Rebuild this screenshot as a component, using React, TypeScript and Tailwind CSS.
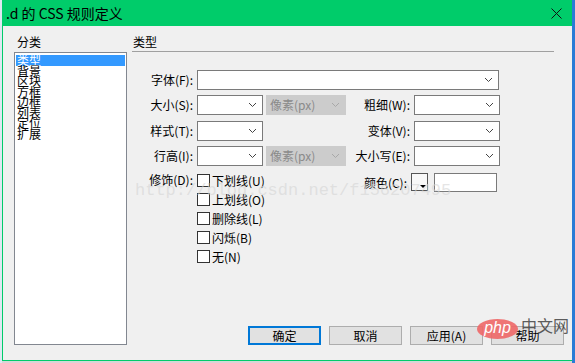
import React from 'react';

const ui = { fontFamily: '"Noto Sans CJK SC", "Noto Sans", sans-serif' };

const Chevron = ({ light = false }: { light?: boolean }) => (
  <svg width="9" height="6" viewBox="0 0 9 6" className="shrink-0">
    <path d="M1 1 L4.5 4.5 L8 1" fill="none" stroke={light ? '#a8a8a8' : '#444'} strokeWidth="1" />
  </svg>
);

const Select = ({ w, text, disabled = false }: { w: string; text?: string; disabled?: boolean }) => (
  <div
    className={`${w} h-[20px] flex items-center justify-between pl-[3px] pr-[5px] border ${
      disabled ? 'bg-[#cccccc] border-[#cccccc] text-[#8a8a8a]' : 'bg-white border-[#7a7a7a]'
    }`}
  >
    <span className="text-[12px] leading-none">{text}</span>
    <Chevron light={disabled} />
  </div>
);

const Label = ({ w, children }: { w: string; children: React.ReactNode }) => (
  <div className={`${w} shrink-0 text-right pr-[4px] text-[12px] leading-none text-black whitespace-nowrap`}>{children}</div>
);

const categories = ['类型', '背景', '区块', '方框', '边框', '列表', '定位', '扩展'];
const decorations = ['下划线(U)', '上划线(O)', '删除线(L)', '闪烁(B)', '无(N)'];
const buttons = ['确定', '取消', '应用(A)', '帮助'];

export default function App() {
  return (
    <div className="w-[575px] h-[363px] bg-[#d6d6d6] relative overflow-hidden" style={ui}>
      <div className="absolute left-0 top-0 w-[2px] h-[363px] bg-[#dfe8f2]" />
      <div className="absolute right-0 top-0 w-[3px] h-[363px] bg-[#2b7bd6]" />
      <div className="ml-[2px] w-[571px] h-[361px] border border-[#00cc6a] border-t-0 bg-[#f0f0f0] flex flex-col">
        {/* title bar */}
        <div className="h-[26px] bg-[#00cc6a] flex items-center justify-between pl-[3px] pr-[10px] shrink-0">
          <span className="text-[14px] text-black leading-none">.d 的 CSS 规则定义</span>
          <svg width="11" height="11" viewBox="0 0 11 11">
            <path d="M0.5 0.5 L10.5 10.5 M10.5 0.5 L0.5 10.5" stroke="#111" strokeWidth="1" />
          </svg>
        </div>

        {/* body */}
        <div className="flex flex-1 pl-[11px] pt-[10px] pb-[15px]">
          {/* categories */}
          <div className="w-[113px] flex flex-col">
            <div className="h-[16px] pl-[3px] text-[12px] leading-none text-black">分类</div>
            <div className="flex-1 bg-white border border-[#828790] pt-[2px] px-[1px]">
              {categories.map((c, i) => (
                <div
                  key={c}
                  className={`h-[10.5px] pl-[1px] text-[12px] leading-[10.5px] ${i === 0 ? 'bg-[#3399ff] text-white' : 'text-black'}`}
                >
                  {c}
                </div>
              ))}
            </div>
          </div>

          {/* settings */}
          <div className="ml-[5px] w-[432px] flex flex-col">
            <div className="w-[422px] h-[16px] pl-[1px] text-[12px] leading-none text-black border-b border-[#a0a0a0]">类型</div>

            <div className="mt-[18px] flex items-center">
              <Label w="w-[65px]">字体(F):</Label>
              <div className="w-[302px] h-[20px] bg-white border border-[#7a7a7a] flex items-center justify-end pr-[5px]">
                <Chevron />
              </div>
            </div>

            <div className="mt-[5px] flex items-center">
              <Label w="w-[65px]">大小(S):</Label>
              <Select w="w-[66px]" />
              <div className="w-[3px]" />
              <Select w="w-[80px]" text="像素(px)" disabled />
              <Label w="w-[68px]">粗细(W):</Label>
              <Select w="w-[86px]" />
            </div>

            <div className="mt-[6px] flex items-center">
              <Label w="w-[65px]">样式(T):</Label>
              <Select w="w-[66px]" />
              <div className="w-[83px]" />
              <Label w="w-[68px]">变体(V):</Label>
              <Select w="w-[86px]" />
            </div>

            <div className="mt-[5px] flex items-center">
              <Label w="w-[65px]">行高(I):</Label>
              <Select w="w-[66px]" />
              <div className="w-[3px]" />
              <Select w="w-[80px]" text="像素(px)" disabled />
              <Label w="w-[68px]">大小写(E):</Label>
              <Select w="w-[86px]" />
            </div>

            <div className="mt-[7px] flex items-start">
              <div className="h-[13px] flex items-center">
                <Label w="w-[65px]">修饰(D):</Label>
              </div>
              <div className="w-[149px] flex flex-col gap-[6px] pt-[1px]">
                {decorations.map((d) => (
                  <div key={d} className="h-[13px] flex items-center">
                    <div className="w-[13px] h-[13px] border border-[#333] bg-white shrink-0" />
                    <span className="ml-[2px] text-[12px] leading-none text-black">{d}</span>
                  </div>
                ))}
              </div>
              <div className="h-[19px] flex items-center">
                <Label w="w-[65px]">颜色(C):</Label>
              </div>
              <div className="w-[17px] h-[18px] border border-[#555] bg-[#f8f8f8] relative shrink-0">
                <div className="absolute right-[1px] bottom-[2px] w-0 h-0 border-l-[3px] border-r-[3px] border-t-[3px] border-l-transparent border-r-transparent border-t-black" />
              </div>
              <div className="ml-[6px] w-[63px] h-[19px] bg-white border border-[#7a7a7a]" />
            </div>

            <div className="mt-auto flex justify-end gap-[8px] pr-[0px]">
              {buttons.map((b, i) => (
                <div
                  key={b}
                  className={`w-[73px] h-[19px] flex items-center justify-center text-[12px] leading-none text-black bg-[#e1e1e1] ${
                    i === 0 ? 'border-2 border-[#0078d7]' : 'border border-[#adadad]'
                  }`}
                >
                  {b}
                </div>
              ))}
            </div>
          </div>
        </div>
      </div>

      {/* watermark */}
      <div
        className="absolute left-[135px] top-[182px] text-[17px] leading-none text-[#d4d4d4]/60 pointer-events-none whitespace-nowrap"
        style={{ fontFamily: '"Liberation Mono", monospace' }}
      >
        http://blog.csdn.net/f156207495
      </div>

      {/* php logo */}
      <div className="absolute left-[477px] top-[319px] w-[41px] h-[20px] rounded-[50%] bg-[#ee6767]/90 flex items-center justify-center">
        <span className="text-white italic text-[16px] leading-none -mt-[2px]" style={{ fontFamily: '"Liberation Sans", sans-serif' }}>
          php
        </span>
      </div>
      <div className="absolute left-[521px] top-[317px] text-[16px] leading-none text-[#333]/80">中文网</div>
    </div>
  );
}
